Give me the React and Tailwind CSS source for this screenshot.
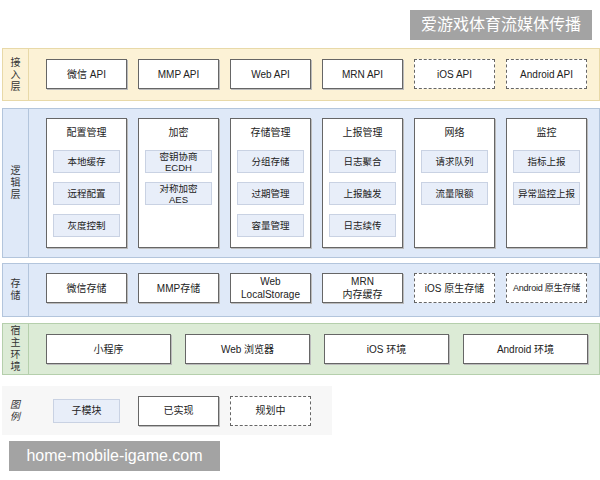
const F = { fontFamily: '"Liberation Sans", "Noto Sans CJK SC", sans-serif' };

const Box = ({ children, dashed, w = "w-[81px]", h = "h-[30px]" }) => (
  <div className={`${w} ${h} shrink-0 flex flex-col items-center justify-center text-center whitespace-nowrap text-[10px] leading-[13px] text-[#222] bg-white ${dashed ? "border border-dashed border-[#666]" : "border border-[#666] shadow-[1px_1px_0_#bbb]"}`}>
    {children}
  </div>
);

const Sub = ({ children }) => (
  <div className="w-[67px] h-[23px] flex flex-col items-center justify-center text-center whitespace-nowrap text-[9.5px] leading-[11px] text-[#222] bg-[#e8eef9] border border-[#c9d2e3]">
    {children}
  </div>
);

const Layer = ({ label, bg, border, children, h, pt }) => (
  <div className={`ml-[2px] flex ${bg} border ${border} ${h}`}>
    <div className={`w-[26px] shrink-0 border-r ${border} flex flex-col items-center justify-center text-[10px] leading-[12px] text-[#333]`}>
      {label.split("").map((c, i) => <span key={i}>{c}</span>)}
    </div>
    <div className={`flex-1 pl-[17px] ${pt}`}>{children}</div>
  </div>
);

const cards = [
  ["配置管理", [["本地缓存"], ["远程配置"], ["灰度控制"]]],
  ["加密", [["密钥协商", "ECDH"], ["对称加密", "AES"]]],
  ["存储管理", [["分组存储"], ["过期管理"], ["容量管理"]]],
  ["上报管理", [["日志聚合"], ["上报触发"], ["日志续传"]]],
  ["网络", [["请求队列"], ["流量限额"]]],
  ["监控", [["指标上报"], ["异常监控上报"]]],
];

export default function App() {
  return (
    <div style={F} className="w-[600px] h-[480px] bg-white overflow-hidden relative">
      <div className="h-[48px] flex justify-end items-start pt-[10px] pr-[8px]">
        <div className="w-[182px] h-[30px] bg-[#a3a3a3] text-white text-[16px] flex items-center justify-center">爱游戏体育流媒体传播</div>
      </div>
      <Layer label="接入层" bg="bg-[#fcf2d6]" border="border-[#e8d9a8]" h="h-[53px]" pt="pt-[10px]">
        <div className="flex gap-[11px]">
          <Box>微信 API</Box><Box>MMP API</Box><Box>Web API</Box><Box>MRN API</Box>
          <Box dashed>iOS API</Box><Box dashed>Android API</Box>
        </div>
      </Layer>
      <div className="h-[7px]" />
      <Layer label="逻辑层" bg="bg-[#dfe9f8]" border="border-[#b3c5dc]" h="h-[150px]" pt="pt-[9px]">
        <div className="flex gap-[11px]">
          {cards.map(([t, subs]) => (
            <div key={t} className="w-[81px] h-[130px] bg-white border border-[#666] shadow-[1px_1px_0_#bbb] flex flex-col items-center pt-[8px]">
              <div className="text-[10px] text-[#222] leading-[12px] mb-[11px]">{t}</div>
              <div className="flex flex-col gap-[9px]">
                {subs.map((s) => <Sub key={s[0]}>{s.map((l) => <span key={l}>{l}</span>)}</Sub>)}
              </div>
            </div>
          ))}
        </div>
      </Layer>
      <div className="h-[5px]" />
      <Layer label="存储" bg="bg-[#dfe9f8]" border="border-[#b3c5dc]" h="h-[54px]" pt="pt-[9px]">
        <div className="flex gap-[11px]">
          <Box>微信存储</Box><Box>MMP存储</Box>
          <Box><span>Web</span><span>LocalStorage</span></Box>
          <Box><span>MRN</span><span>内存缓存</span></Box>
          <Box dashed>iOS 原生存储</Box>
          <Box dashed><span className="text-[9px] tracking-[-0.2px]">Android 原生存储</span></Box>
        </div>
      </Layer>
      <div className="h-[6px]" />
      <Layer label="宿主环境" bg="bg-[#dcebd6]" border="border-[#b5cfac]" h="h-[52px]" pt="pt-[10px]">
        <div className="flex gap-[14px]">
          <Box w="w-[125px]">小程序</Box><Box w="w-[125px]">Web 浏览器</Box>
          <Box w="w-[125px]">iOS 环境</Box><Box w="w-[125px]">Android 环境</Box>
        </div>
      </Layer>
      <div className="h-[11px]" />
      <div className="ml-[2px] w-[330px] h-[49px] bg-[#f7f7f7] flex items-center">
        <div className="w-[26px] flex flex-col items-center text-[10px] leading-[12px] italic text-[#333]"><span>图</span><span>例</span></div>
        <div className="flex items-center pl-[25px]">
          <div className="w-[67px] h-[24px] bg-[#e8eef9] border border-[#c9d2e3] flex items-center justify-center text-[10px] text-[#222]">子模块</div>
          <div className="w-[18px]" />
          <Box>已实现</Box>
          <div className="w-[11px]" />
          <Box dashed>规划中</Box>
        </div>
      </div>
      <div className="ml-[9px] mt-[6px] w-[211px] h-[30px] bg-[#a3a3a3] text-white text-[16px] flex items-center justify-center">home-mobile-igame.com</div>
    </div>
  );
}
